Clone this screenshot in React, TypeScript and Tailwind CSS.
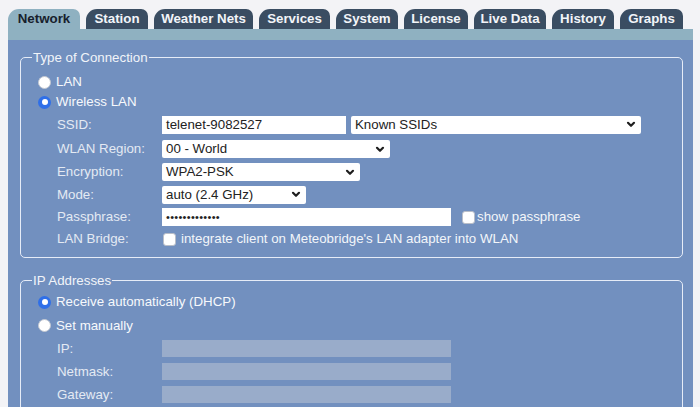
import type { ReactNode } from "react";

const tabs = [
  { name: "Network", w: "w-[72px]", active: true },
  { name: "Station", w: "w-[62px]" },
  { name: "Weather Nets", w: "w-[99px]" },
  { name: "Services", w: "w-[71px]" },
  { name: "System", w: "w-[62px]" },
  { name: "License", w: "w-[64px]" },
  { name: "Live Data", w: "w-[72px]" },
  { name: "History", w: "w-[62px]" },
  { name: "Graphs", w: "w-[63px]" },
];

const Chevron = () => (
  <svg width="10" height="7" viewBox="0 0 10 7" className="shrink-0">
    <path d="M2 1.8 L5 4.8 L8 1.8" fill="none" stroke="#1f1f1f" strokeWidth="2.2" strokeLinecap="round" strokeLinejoin="round" />
  </svg>
);

const Radio = ({ checked }: { checked?: boolean }) =>
  checked ? (
    <span className="w-[13px] h-[13px] rounded-full bg-[#2f6fe8] flex items-center justify-center shrink-0">
      <span className="w-[6px] h-[6px] rounded-full bg-white" />
    </span>
  ) : (
    <span className="w-[13px] h-[13px] rounded-full bg-white border border-[#c4c9d2] shrink-0" />
  );

const Checkbox = () => (
  <span className="w-[13px] h-[13px] rounded-[3px] bg-white border border-[#b9bec8] shrink-0" />
);

const TextBox = ({ w, children }: { w: string; children?: ReactNode }) => (
  <span className={`${w} h-[18px] bg-white text-[#222] pl-[4px] flex items-center`}>{children}</span>
);

const Select = ({ w, value }: { w: string; value: string }) => (
  <span className={`${w} h-[18px] bg-white text-[#222] pl-[4px] pr-[5px] flex items-center justify-between rounded-[2px]`}>
    <span>{value}</span>
    <Chevron />
  </span>
);

const Disabled = () => <span className="w-[289px] h-[17px] bg-[#99acca]" />;

const Row = ({ label, h, children }: { label: string; h: string; children: ReactNode }) => (
  <div className={`flex items-center ${h} pl-[25px]`}>
    <span className="w-[105px] text-[#e4eaf3]">{label}</span>
    {children}
  </div>
);

const RadioRow = ({ label, checked, h }: { label: string; checked?: boolean; h: string }) => (
  <div className={`flex items-center gap-[5px] ${h} pl-[6px] text-[#f7f9fc]`}>
    <Radio checked={checked} />
    <span>{label}</span>
  </div>
);

export default function App() {
  return (
    <div className="w-[700px] h-[407px] overflow-hidden bg-[#f3f3f6] pl-2 pt-[9px] font-['Liberation_Sans',Arial,sans-serif] text-[13.3px]">
      <div className="w-[685px]">
        <div className="flex items-end gap-[6px] h-5">
          {tabs.map((t) => (
            <div
              key={t.name}
              className={`${t.w} h-5 flex items-center justify-center rounded-tl-[11px] rounded-tr-[7px] font-bold text-[13.3px] ${
                t.active ? "bg-[#8fb1c1] text-[#17202c]" : "bg-[#3a4d62] text-[#f2f5f9]"
              }`}
            >
              {t.name}
            </div>
          ))}
        </div>
        <div className="h-[11px] bg-[#8fb1c1]" />
        <div className="h-[367px] bg-[#7290bf] px-3 pt-[10px]">
          <fieldset className="w-[663px] border border-[#e6ecf7] rounded-[5px] px-[11px] pb-[7px]">
            <legend className="px-px text-[#f1f4f9] leading-[15px]">Type of Connection</legend>
            <div className="pt-[7px]">
              <RadioRow label="LAN" h="h-5" />
              <RadioRow label="Wireless LAN" checked h="h-5" />
              <Row label="SSID:" h="h-[25px]">
                <TextBox w="w-[184px]">telenet-9082527</TextBox>
                <span className="w-[5px]" />
                <Select w="w-[290px]" value="Known SSIDs" />
              </Row>
              <Row label="WLAN Region:" h="h-[24px]">
                <Select w="w-[228px]" value="00 - World" />
              </Row>
              <Row label="Encryption:" h="h-[22px]">
                <Select w="w-[198px]" value="WPA2-PSK" />
              </Row>
              <Row label="Mode:" h="h-[23px]">
                <Select w="w-[144px]" value="auto (2.4 GHz)" />
              </Row>
              <Row label="Passphrase:" h="h-[22px]">
                <TextBox w="w-[289px]">
                  <span className="text-[11px] tracking-[0.3px] leading-none">•••••••••••••</span>
                </TextBox>
                <span className="w-[11px]" />
                <Checkbox />
                <span className="ml-[2px] text-[#f3f6fa]">show passphrase</span>
              </Row>
              <Row label="LAN Bridge:" h="h-[22px]">
                <span className="w-px" />
                <Checkbox />
                <span className="ml-[5px] text-[#f3f6fa]">integrate client on Meteobridge's LAN adapter into WLAN</span>
              </Row>
            </div>
          </fieldset>
          <fieldset className="w-[663px] mt-[15px] border border-[#e6ecf7] rounded-[5px] px-[11px] pb-[7px]">
            <legend className="px-px text-[#f1f4f9] leading-[15px]">IP Addresses</legend>
            <div className="pt-[2px]">
              <RadioRow label="Receive automatically (DHCP)" checked h="h-6" />
              <RadioRow label="Set manually" h="h-[23px]" />
              <Row label="IP:" h="h-[23px]">
                <Disabled />
              </Row>
              <Row label="Netmask:" h="h-[23px]">
                <Disabled />
              </Row>
              <Row label="Gateway:" h="h-[23px]">
                <Disabled />
              </Row>
            </div>
          </fieldset>
        </div>
      </div>
    </div>
  );
}
